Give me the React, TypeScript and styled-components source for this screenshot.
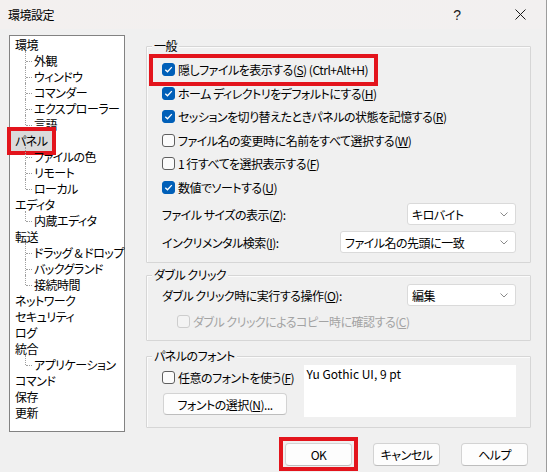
import React from 'react'
import styled, { createGlobalStyle } from 'styled-components'

const RED = '#e3141c'

const Global = createGlobalStyle`
  html, body { margin: 0; padding: 0; }
  body {
    font-family: "Noto Sans CJK JP", "Noto Sans", sans-serif;
    font-size: 12px;
    color: #000;
    font-feature-settings: "palt";
    letter-spacing: -0.5px;
  }
  * { box-sizing: border-box; }
`

const Window = styled.div`
  width: 547px;
  height: 472px;
  background: #f0f0f0;
  border-right: 1px solid #9c9c9c;
  display: flex;
  flex-direction: column;
  overflow: hidden;
`

const TitleBar = styled.div`
  height: 29px;
  display: flex;
  align-items: center;
  padding: 0 3px 0 8px;
  background: linear-gradient(90deg, #f3f0ef, #f2f0f0);
`

const Title = styled.div`
  font-size: 12px;
  line-height: 16px;
`

const TitleButtons = styled.div`
  margin-left: auto;
  display: flex;
  gap: 17px;
`

const TitleBtn = styled.div`
  width: 46px;
  height: 29px;
  display: flex;
  align-items: center;
  justify-content: center;
  font-family: "Liberation Sans", sans-serif;
  font-size: 14px;
  color: #1a1a1a;
`

const Body = styled.div`
  display: flex;
  padding: 6px 0 0 9px;
`

const Tree = styled.div`
  width: 116px;
  height: 397px;
  background: #fff;
  border: 1px solid #828282;
  padding: 1px 0 0 0;
`

const TreeRow = styled.div<{ $level: number; $last?: boolean }>`
  position: relative;
  height: 16px;
  line-height: 16px;
  white-space: nowrap;
  padding-left: ${p => (p.$level ? 22 : 3)}px;

  ${p =>
    p.$level
      ? `
    &::before {
      content: '';
      position: absolute;
      left: 15px;
      top: -2px;
      height: ${p.$last ? 10 : 18}px;
      border-left: 1px dotted #a0a0a0;
    }
    &::after {
      content: '';
      position: absolute;
      left: 16px;
      top: 8px;
      width: 6px;
      border-top: 1px dotted #a0a0a0;
    }
  `
      : ''}
`

const TreeLabel = styled.span<{ $selected?: boolean }>`
  display: inline-block;
  height: 16px;
  padding: 0 2px;
  ${p =>
    p.$selected
      ? `
    background: #dadada;
    box-shadow: 0 0 0 2px #dadada;
    outline: 4px solid ${RED};
    outline-offset: 2px;
  `
      : ''}
`

const Right = styled.div`
  margin-left: 21px;
  width: 385px;
  display: flex;
  flex-direction: column;
`

const Group = styled.div<{ $height: number; $top: number }>`
  position: relative;
  height: ${p => p.$height}px;
  margin-top: ${p => p.$top}px;
  border: 1px solid #d6d6d6;
  border-radius: 1px;
  box-shadow: inset 1px 1px 0 #fbfbfb;
  display: flex;
  flex-direction: column;
  padding: ${p => (p.$top === 11 ? 11 : 8)}px 14px 0 15px;
`

const Legend = styled.div`
  position: absolute;
  top: -9px;
  left: 5px;
  padding: 0 2px;
  line-height: 16px;
  background: #f0f0f0;
`

const CheckRow = styled.div<{ $height?: number; $indent?: number; $highlight?: boolean; $disabled?: boolean }>`
  display: flex;
  align-items: center;
  gap: 3px;
  width: fit-content;
  height: ${p => p.$height ?? 23.5}px;
  margin-left: ${p => (p.$highlight ? -9 : p.$indent ?? 0)}px;
  padding: ${p => (p.$highlight ? '0 6px 0 9px' : '0')};
  color: ${p => (p.$disabled ? '#a3a3a3' : '#000')};
  white-space: nowrap;
  ${p => (p.$highlight ? `outline: 4px solid ${RED};` : '')}
`

const Box = styled.span<{ $checked?: boolean; $disabled?: boolean }>`
  width: 13px;
  height: 13px;
  flex: none;
  border-radius: 3px;
  display: inline-flex;
  align-items: center;
  justify-content: center;
  background: ${p => (p.$checked ? '#005fb8' : p.$disabled ? '#f3f3f3' : '#fbfbfb')};
  border: 1px solid ${p => (p.$checked ? '#005fb8' : p.$disabled ? '#cdcdcd' : '#5f5f5f')};
`

const SelectRow = styled.div<{ $top: number }>`
  display: flex;
  align-items: center;
  justify-content: space-between;
  height: 22px;
  margin-top: ${p => p.$top}px;
  white-space: nowrap;
`

const Combo = styled.div<{ $width: number }>`
  width: ${p => p.$width}px;
  height: 22px;
  background: #fff;
  border: 1px solid #dadada;
  border-radius: 3px;
  display: flex;
  align-items: center;
  justify-content: space-between;
  padding: 0 7px 0 4px;
`

const FontArea = styled.div`
  display: flex;
`

const FontLeft = styled.div`
  width: 142px;
  display: flex;
  flex-direction: column;
`

const Button = styled.div<{ $width: number; $highlight?: boolean }>`
  position: relative;
  width: ${p => p.$width}px;
  height: 22px;
  display: flex;
  align-items: center;
  justify-content: center;
  background: #fdfdfd;
  border: 1px solid #d3d3d3;
  border-bottom-color: #bdbdbd;
  border-radius: 4px;
  white-space: nowrap;
  ${p =>
    p.$highlight
      ? `
    &::after {
      content: '';
      position: absolute;
      inset: -7px -7px -6px -7px;
      border: 4px solid ${RED};
    }
  `
      : ''}
`

const Preview = styled.div`
  width: 213px;
  height: 52px;
  background: #fff;
  padding: 1px 3px;
  line-height: 16px;
  letter-spacing: 0;
`

const ButtonBar = styled.div`
  display: flex;
  justify-content: flex-end;
  gap: 21px;
  margin-top: 11px;
  padding-right: 18px;
`

const DialogButton = styled(Button)`
  height: 23px;
`

const Check = ({ on }: { on?: boolean }) =>
  on ? (
    <svg width="9" height="9" viewBox="0 0 9 9">
      <path d="M1.3 4.7 L3.5 6.8 L7.8 2.1" stroke="#fff" strokeWidth="1.3" fill="none" />
    </svg>
  ) : null

const Chevron = () => (
  <svg width="8" height="5" viewBox="0 0 8 5">
    <path d="M0.5 0.5 L4 4 L7.5 0.5" stroke="#8a8a8a" strokeWidth="1" fill="none" />
  </svg>
)

type Node = { label: string; level: number; last?: boolean; selected?: boolean }

const tree: Node[] = [
  { label: '環境', level: 0 },
  { label: '外観', level: 1 },
  { label: 'ウィンドウ', level: 1 },
  { label: 'コマンダー', level: 1 },
  { label: 'エクスプローラー', level: 1 },
  { label: '言語', level: 1, last: true },
  { label: 'パネル', level: 0, selected: true },
  { label: 'ファイルの色', level: 1 },
  { label: 'リモート', level: 1 },
  { label: 'ローカル', level: 1, last: true },
  { label: 'エディタ', level: 0 },
  { label: '内蔵エディタ', level: 1, last: true },
  { label: '転送', level: 0 },
  { label: 'ドラッグ & ドロップ', level: 1 },
  { label: 'バックグランド', level: 1 },
  { label: '接続時間', level: 1, last: true },
  { label: 'ネットワーク', level: 0 },
  { label: 'セキュリティ', level: 0 },
  { label: 'ログ', level: 0 },
  { label: '統合', level: 0 },
  { label: 'アプリケーション', level: 1, last: true },
  { label: 'コマンド', level: 0 },
  { label: '保存', level: 0 },
  { label: '更新', level: 0 },
]

type Opt = { text: string; key: string; tail?: string; on: boolean; highlight?: boolean }

const general: Opt[] = [
  { text: '隠しファイルを表示する', key: 'S', tail: ' (Ctrl+Alt+H)', on: true, highlight: true },
  { text: 'ホーム ディレクトリをデフォルトにする', key: 'H', on: true },
  { text: 'セッションを切り替えたときパネルの状態を記憶する', key: 'R', on: true },
  { text: 'ファイル名の変更時に名前をすべて選択する', key: 'W', on: false },
  { text: '1 行すべてを選択表示する', key: 'F', on: false },
  { text: '数値でソートする', key: 'U', on: true },
]

export default function App() {
  return (
    <>
      <Global />
      <Window>
        <TitleBar>
          <Title>環境設定</Title>
          <TitleButtons>
            <TitleBtn>?</TitleBtn>
            <TitleBtn>
              <svg width="11" height="11" viewBox="0 0 11 11">
                <path d="M0.5 0.5 L10.5 10.5 M10.5 0.5 L0.5 10.5" stroke="#1a1a1a" strokeWidth="1" />
              </svg>
            </TitleBtn>
          </TitleButtons>
        </TitleBar>

        <Body>
          <Tree>
            {tree.map(n => (
              <TreeRow key={n.label} $level={n.level} $last={n.last}>
                <TreeLabel $selected={n.selected}>{n.label}</TreeLabel>
              </TreeRow>
            ))}
          </Tree>

          <Right>
            <Group $height={217} $top={11}>
              <Legend>一般</Legend>
              {general.map(o => (
                <CheckRow key={o.key} $highlight={o.highlight}>
                  <Box $checked={o.on}>
                    <Check on={o.on} />
                  </Box>
                  <span>
                    {o.text}(<u>{o.key}</u>){o.tail}
                  </span>
                </CheckRow>
              ))}
              <SelectRow $top={4}>
                <span>
                  ファイル サイズの表示(<u>Z</u>):
                </span>
                <Combo $width={109}>
                  <span>キロバイト</span>
                  <Chevron />
                </Combo>
              </SelectRow>
              <SelectRow $top={6}>
                <span>
                  インクリメンタル検索(<u>I</u>):
                </span>
                <Combo $width={176}>
                  <span>ファイル名の先頭に一致</span>
                  <Chevron />
                </Combo>
              </SelectRow>
            </Group>

            <Group $height={66} $top={12}>
              <Legend>ダブル クリック</Legend>
              <SelectRow $top={0}>
                <span>
                  ダブル クリック時に実行する操作(<u>O</u>):
                </span>
                <Combo $width={109}>
                  <span>編集</span>
                  <Chevron />
                </Combo>
              </SelectRow>
              <CheckRow $height={22} $indent={15} $disabled style={{ marginTop: 4 }}>
                <Box $disabled />
                <span>
                  ダブル クリックによるコピー時に確認する(<u>C</u>)
                </span>
              </CheckRow>
            </Group>

            <Group $height={72} $top={15}>
              <Legend>パネルのフォント</Legend>
              <FontArea>
                <FontLeft>
                  <CheckRow $height={22} style={{ marginTop: 1 }}>
                    <Box />
                    <span>
                      任意のフォントを使う(<u>F</u>)
                    </span>
                  </CheckRow>
                  <Button $width={124} style={{ marginTop: 5, marginLeft: 1 }}>
                    フォントの選択(<u>N</u>)...
                  </Button>
                </FontLeft>
                <Preview>Yu Gothic UI, 9 pt</Preview>
              </FontArea>
            </Group>
          </Right>
        </Body>

        <ButtonBar>
          <DialogButton $width={67} $highlight>
            OK
          </DialogButton>
          <DialogButton $width={67}>キャンセル</DialogButton>
          <DialogButton $width={67}>ヘルプ</DialogButton>
        </ButtonBar>
      </Window>
    </>
  )
}
